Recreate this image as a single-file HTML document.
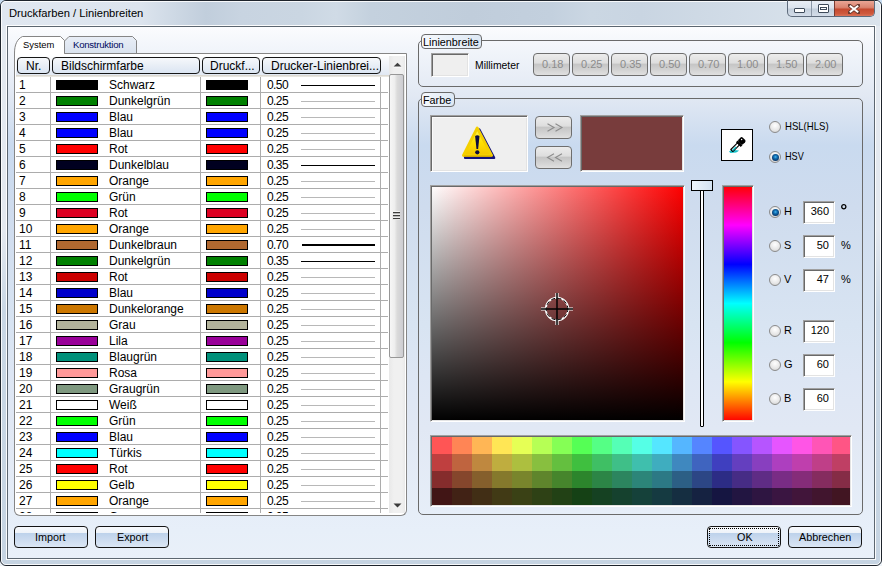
<!DOCTYPE html><html><head><meta charset="utf-8"><style>
*{margin:0;padding:0;box-sizing:border-box}
html,body{width:882px;height:566px;overflow:hidden;background:linear-gradient(#c8dcf0,#eef3f8)}
body{position:relative;font-family:"Liberation Sans", sans-serif;font-size:12px;color:#000}
.a{position:absolute}
.t{position:absolute;white-space:nowrap;line-height:1}
.gb{position:absolute;border:1px solid #6e6e6e;border-radius:4px;background:linear-gradient(#ececec,#dedede 42%,#c6c6c6 50%,#d2d2d2 75%,#e0e0e0)}
.gt{position:absolute;white-space:nowrap;line-height:1;font-size:11px;color:#8c8c8c}
.bb{position:absolute;border:1px solid #141414;border-radius:4px;background:linear-gradient(#f8fafd 0,#eef3f9 28%,#bdd2eb 31%,#c8d9ee 55%,#dbe6f4 100%)}
.bt{position:absolute;white-space:nowrap;line-height:1;font-size:10.8px;color:#000}
.sk{position:absolute;border:1px solid;border-color:#a0a0a0 #fff #fff #a0a0a0;box-shadow:inset 1px 1px 0 #696969,inset -1px -1px 0 #e3e3e3}
.ed{position:absolute;border:1px solid;border-color:#a0a0a0 #fff #fff #a0a0a0;box-shadow:inset 1px 1px 0 #696969,inset -1px -1px 0 #e3e3e3;background:#fff}
.lt{position:absolute;white-space:nowrap;line-height:1;font-size:11px;color:#000}
</style></head><body>

<div class="a" style="left:0;top:0;width:882px;height:566px;border:1px solid #1e242c;border-radius:6px 6px 6px 6px;background:linear-gradient(#e3e9f0 0,#e4e9f0 230px,#c9d7e5 310px,#c6d4e2 566px)"></div>
<div class="a" style="left:1px;top:1px;width:880px;height:25px;border-radius:5px 5px 0 0;background:linear-gradient(90deg,#e0e7f0 0,#dce4ee 140px,#cdd8e4 175px,#c1cedc 205px,#c8d4e1 240px,#cad6e2 300px,#d0dbe6 335px,#c4d1de 370px,#c0cddb 470px,#c3d0de 550px,#cbd7e3 590px,#c9d5e2 640px,#d6e0ea 790px,#dae3ec 880px)"></div>
<div class="a" style="left:1px;top:1px;width:880px;height:564px;border:1px solid rgba(255,255,255,.85);border-radius:5px;"></div>
<div class="a" style="left:6px;top:25px;width:870px;height:535px;border:1px solid rgba(255,255,255,.9)"></div>
<div class="t" style="left:9px;top:8px;font-size:11.2px;color:#000">Druckfarben / Linienbreiten</div>
<div class="a" style="left:787px;top:0;width:88px;height:17px;border:1px solid #5e6b7c;border-top:1px solid #2e2e2e;border-radius:0 0 5px 5px;overflow:hidden;background:linear-gradient(#e9eef5,#dbe3ed 45%,#c3cfdc 55%,#d4dde9)"><div class="a" style="left:23px;top:0;width:1px;height:17px;background:#8b97a6"></div><div class="a" style="left:46px;top:0;width:1px;height:17px;background:#7a3a30"></div><div class="a" style="left:47px;top:0;width:40px;height:16px;background:linear-gradient(#e9a595,#d98470 40%,#c54a30 52%,#cf5a3e 80%,#e08068)"></div><div class="a" style="left:6px;top:7px;width:11px;height:5px;border:1px solid #3e4a5a;background:#fff;border-radius:1px"></div><div class="a" style="left:30px;top:3px;width:11px;height:9px;border:1px solid #3e4a5a;background:#fff;border-radius:1px"></div><div class="a" style="left:32px;top:6px;width:7px;height:3px;border:1px solid #3e4a5a"></div><svg class="a" style="left:60px;top:3px" width="12" height="10" viewBox="0 0 12 10"><path d="M1.5 1.5 L10.5 8.5 M10.5 1.5 L1.5 8.5" stroke="#6a3a30" stroke-width="3.6" stroke-linecap="round"/><path d="M1.8 1.7 L10.2 8.3 M10.2 1.7 L1.8 8.3" stroke="#fff" stroke-width="2"/></svg></div>
<div class="a" style="left:7px;top:26px;width:868px;height:533px;border:1px solid #5c6670;background:linear-gradient(#fbfcfe 0px,#f3f6fb 18px,#e1e8f3 71px,#c9daef 118px,#cfdcee 181px,#d8e4f2 298px,#dde6f4 348px,#e1e8f4 401px,#e7eff9 503px,#e9f0f9 532px)"></div>
<svg class="a" style="left:0;top:0" width="410" height="60" viewBox="0 0 410 60"><defs><linearGradient id="kt" x1="0" y1="0" x2="0" y2="1"><stop offset="0" stop-color="#e9eef6"/><stop offset="1" stop-color="#d9e2ee"/></linearGradient></defs><path d="M64.5 54 L64.5 41 L69 36.5 L132.5 36.5 L136.5 40.5 L136.5 54 Z" fill="url(#kt)" stroke="#858585" stroke-width="1"/><path d="M14.5 60 L14.5 53 C14.5 45 17 39 22.5 36.5 L60.5 36.5 L64.5 40.5 L64.5 54 L406.5 54 L406.5 60" fill="#fff" stroke="none"/><path d="M14.5 60 L14.5 53 C14.5 45 17 39 22.5 36.5 L60.5 36.5 L64.5 40.5 L64.5 53.5 L406.5 53.5 L406.5 60" fill="none" stroke="#858585" stroke-width="1"/></svg>
<div class="t" style="left:23px;top:40px;font-size:9.4px;color:#000">System</div>
<div class="t" style="left:73px;top:40px;font-size:9.6px;letter-spacing:-0.25px;color:#000a60">Konstruktion</div>
<div class="a" style="left:14px;top:54px;width:393px;height:462px;border:1px solid #858585;border-top:none;border-radius:0 0 6px 6px;background:#fff"></div>
<div class="a" style="left:16px;top:55px;width:373px;height:21px;background:linear-gradient(#ffffff,#f2f5fa 40%,#dfe7f2)"></div>
<div class="a" style="left:16px;top:75px;width:373px;height:2px;background:linear-gradient(#d6d2ca,#efede8)"></div>
<div class="a" style="left:17px;top:57px;width:33px;height:17px;border:1px solid #161616;border-radius:4px;background:linear-gradient(#f6f8fb,#e8eef6 50%,#dbe5f2)"></div>
<div class="t" style="left:26px;top:60px;font-size:12px">Nr.</div>
<div class="a" style="left:52px;top:57px;width:148px;height:17px;border:1px solid #161616;border-radius:4px;background:linear-gradient(#f6f8fb,#e8eef6 50%,#dbe5f2)"></div>
<div class="t" style="left:61px;top:60px;font-size:12px">Bildschirmfarbe</div>
<div class="a" style="left:202px;top:57px;width:58px;height:17px;border:1px solid #161616;border-radius:4px;background:linear-gradient(#f6f8fb,#e8eef6 50%,#dbe5f2)"></div>
<div class="t" style="left:210px;top:60px;font-size:12px">Druckf...</div>
<div class="a" style="left:262px;top:57px;width:119px;height:17px;border:1px solid #161616;border-radius:4px;background:linear-gradient(#f6f8fb,#e8eef6 50%,#dbe5f2)"></div>
<div class="t" style="left:271px;top:60px;font-size:12px">Drucker-Linienbrei...</div>
<div class="a" style="left:16px;top:77px;width:372px;height:436px;overflow:hidden">
<div class="a" style="left:34px;top:0;width:1px;height:440px;background:#acacac"></div>
<div class="a" style="left:184px;top:0;width:1px;height:440px;background:#acacac"></div>
<div class="a" style="left:244px;top:0;width:1px;height:440px;background:#acacac"></div>
<div class="a" style="left:364px;top:0;width:1px;height:440px;background:#acacac"></div>
<div class="a" style="left:0;top:15px;width:372px;height:1px;background:#acacac"></div>
<div class="t" style="left:3px;top:2px">1</div>
<div class="a" style="left:40px;top:3px;width:42px;height:10px;border:1px solid #000;background:#000000"></div>
<div class="t" style="left:93px;top:2px">Schwarz</div>
<div class="a" style="left:190px;top:3px;width:42px;height:10px;border:1px solid #000;background:#000000"></div>
<div class="t" style="left:251px;top:2px;letter-spacing:-0.6px">0.50</div>
<div class="a" style="left:285px;top:8px;width:74px;height:1px;background:#000"></div>
<div class="a" style="left:0;top:31px;width:372px;height:1px;background:#acacac"></div>
<div class="t" style="left:3px;top:18px">2</div>
<div class="a" style="left:40px;top:19px;width:42px;height:10px;border:1px solid #000;background:#008000"></div>
<div class="t" style="left:93px;top:18px">Dunkelgrün</div>
<div class="a" style="left:190px;top:19px;width:42px;height:10px;border:1px solid #000;background:#008000"></div>
<div class="t" style="left:251px;top:18px;letter-spacing:-0.6px">0.25</div>
<div class="a" style="left:285px;top:24px;width:74px;height:1px;background:#b8b8b8"></div>
<div class="a" style="left:0;top:47px;width:372px;height:1px;background:#acacac"></div>
<div class="t" style="left:3px;top:34px">3</div>
<div class="a" style="left:40px;top:35px;width:42px;height:10px;border:1px solid #000;background:#0000ff"></div>
<div class="t" style="left:93px;top:34px">Blau</div>
<div class="a" style="left:190px;top:35px;width:42px;height:10px;border:1px solid #000;background:#0000ff"></div>
<div class="t" style="left:251px;top:34px;letter-spacing:-0.6px">0.25</div>
<div class="a" style="left:285px;top:40px;width:74px;height:1px;background:#b8b8b8"></div>
<div class="a" style="left:0;top:63px;width:372px;height:1px;background:#acacac"></div>
<div class="t" style="left:3px;top:50px">4</div>
<div class="a" style="left:40px;top:51px;width:42px;height:10px;border:1px solid #000;background:#0000ff"></div>
<div class="t" style="left:93px;top:50px">Blau</div>
<div class="a" style="left:190px;top:51px;width:42px;height:10px;border:1px solid #000;background:#0000ff"></div>
<div class="t" style="left:251px;top:50px;letter-spacing:-0.6px">0.25</div>
<div class="a" style="left:285px;top:56px;width:74px;height:1px;background:#b8b8b8"></div>
<div class="a" style="left:0;top:79px;width:372px;height:1px;background:#acacac"></div>
<div class="t" style="left:3px;top:66px">5</div>
<div class="a" style="left:40px;top:67px;width:42px;height:10px;border:1px solid #000;background:#ff0000"></div>
<div class="t" style="left:93px;top:66px">Rot</div>
<div class="a" style="left:190px;top:67px;width:42px;height:10px;border:1px solid #000;background:#ff0000"></div>
<div class="t" style="left:251px;top:66px;letter-spacing:-0.6px">0.25</div>
<div class="a" style="left:285px;top:72px;width:74px;height:1px;background:#b8b8b8"></div>
<div class="a" style="left:0;top:95px;width:372px;height:1px;background:#acacac"></div>
<div class="t" style="left:3px;top:82px">6</div>
<div class="a" style="left:40px;top:83px;width:42px;height:10px;border:1px solid #000;background:#000020"></div>
<div class="t" style="left:93px;top:82px">Dunkelblau</div>
<div class="a" style="left:190px;top:83px;width:42px;height:10px;border:1px solid #000;background:#000020"></div>
<div class="t" style="left:251px;top:82px;letter-spacing:-0.6px">0.35</div>
<div class="a" style="left:285px;top:88px;width:74px;height:1px;background:#000"></div>
<div class="a" style="left:0;top:111px;width:372px;height:1px;background:#acacac"></div>
<div class="t" style="left:3px;top:98px">7</div>
<div class="a" style="left:40px;top:99px;width:42px;height:10px;border:1px solid #000;background:#ffa500"></div>
<div class="t" style="left:93px;top:98px">Orange</div>
<div class="a" style="left:190px;top:99px;width:42px;height:10px;border:1px solid #000;background:#ffa500"></div>
<div class="t" style="left:251px;top:98px;letter-spacing:-0.6px">0.25</div>
<div class="a" style="left:285px;top:104px;width:74px;height:1px;background:#b8b8b8"></div>
<div class="a" style="left:0;top:127px;width:372px;height:1px;background:#acacac"></div>
<div class="t" style="left:3px;top:114px">8</div>
<div class="a" style="left:40px;top:115px;width:42px;height:10px;border:1px solid #000;background:#00ff00"></div>
<div class="t" style="left:93px;top:114px">Grün</div>
<div class="a" style="left:190px;top:115px;width:42px;height:10px;border:1px solid #000;background:#00ff00"></div>
<div class="t" style="left:251px;top:114px;letter-spacing:-0.6px">0.25</div>
<div class="a" style="left:285px;top:120px;width:74px;height:1px;background:#b8b8b8"></div>
<div class="a" style="left:0;top:143px;width:372px;height:1px;background:#acacac"></div>
<div class="t" style="left:3px;top:130px">9</div>
<div class="a" style="left:40px;top:131px;width:42px;height:10px;border:1px solid #000;background:#dd0022"></div>
<div class="t" style="left:93px;top:130px">Rot</div>
<div class="a" style="left:190px;top:131px;width:42px;height:10px;border:1px solid #000;background:#dd0022"></div>
<div class="t" style="left:251px;top:130px;letter-spacing:-0.6px">0.25</div>
<div class="a" style="left:285px;top:136px;width:74px;height:1px;background:#b8b8b8"></div>
<div class="a" style="left:0;top:159px;width:372px;height:1px;background:#acacac"></div>
<div class="t" style="left:3px;top:146px">10</div>
<div class="a" style="left:40px;top:147px;width:42px;height:10px;border:1px solid #000;background:#ffa500"></div>
<div class="t" style="left:93px;top:146px">Orange</div>
<div class="a" style="left:190px;top:147px;width:42px;height:10px;border:1px solid #000;background:#ffa500"></div>
<div class="t" style="left:251px;top:146px;letter-spacing:-0.6px">0.25</div>
<div class="a" style="left:285px;top:152px;width:74px;height:1px;background:#b8b8b8"></div>
<div class="a" style="left:0;top:175px;width:372px;height:1px;background:#acacac"></div>
<div class="t" style="left:3px;top:162px">11</div>
<div class="a" style="left:40px;top:163px;width:42px;height:10px;border:1px solid #000;background:#b06830"></div>
<div class="t" style="left:93px;top:162px">Dunkelbraun</div>
<div class="a" style="left:190px;top:163px;width:42px;height:10px;border:1px solid #000;background:#b06830"></div>
<div class="t" style="left:251px;top:162px;letter-spacing:-0.6px">0.70</div>
<div class="a" style="left:286px;top:167px;width:73px;height:2px;background:#000"></div>
<div class="a" style="left:0;top:191px;width:372px;height:1px;background:#acacac"></div>
<div class="t" style="left:3px;top:178px">12</div>
<div class="a" style="left:40px;top:179px;width:42px;height:10px;border:1px solid #000;background:#008000"></div>
<div class="t" style="left:93px;top:178px">Dunkelgrün</div>
<div class="a" style="left:190px;top:179px;width:42px;height:10px;border:1px solid #000;background:#008000"></div>
<div class="t" style="left:251px;top:178px;letter-spacing:-0.6px">0.35</div>
<div class="a" style="left:285px;top:184px;width:74px;height:1px;background:#000"></div>
<div class="a" style="left:0;top:207px;width:372px;height:1px;background:#acacac"></div>
<div class="t" style="left:3px;top:194px">13</div>
<div class="a" style="left:40px;top:195px;width:42px;height:10px;border:1px solid #000;background:#cc0000"></div>
<div class="t" style="left:93px;top:194px">Rot</div>
<div class="a" style="left:190px;top:195px;width:42px;height:10px;border:1px solid #000;background:#cc0000"></div>
<div class="t" style="left:251px;top:194px;letter-spacing:-0.6px">0.25</div>
<div class="a" style="left:285px;top:200px;width:74px;height:1px;background:#b8b8b8"></div>
<div class="a" style="left:0;top:223px;width:372px;height:1px;background:#acacac"></div>
<div class="t" style="left:3px;top:210px">14</div>
<div class="a" style="left:40px;top:211px;width:42px;height:10px;border:1px solid #000;background:#0000cc"></div>
<div class="t" style="left:93px;top:210px">Blau</div>
<div class="a" style="left:190px;top:211px;width:42px;height:10px;border:1px solid #000;background:#0000cc"></div>
<div class="t" style="left:251px;top:210px;letter-spacing:-0.6px">0.25</div>
<div class="a" style="left:285px;top:216px;width:74px;height:1px;background:#b8b8b8"></div>
<div class="a" style="left:0;top:239px;width:372px;height:1px;background:#acacac"></div>
<div class="t" style="left:3px;top:226px">15</div>
<div class="a" style="left:40px;top:227px;width:42px;height:10px;border:1px solid #000;background:#cc7700"></div>
<div class="t" style="left:93px;top:226px">Dunkelorange</div>
<div class="a" style="left:190px;top:227px;width:42px;height:10px;border:1px solid #000;background:#cc7700"></div>
<div class="t" style="left:251px;top:226px;letter-spacing:-0.6px">0.25</div>
<div class="a" style="left:285px;top:232px;width:74px;height:1px;background:#b8b8b8"></div>
<div class="a" style="left:0;top:255px;width:372px;height:1px;background:#acacac"></div>
<div class="t" style="left:3px;top:242px">16</div>
<div class="a" style="left:40px;top:243px;width:42px;height:10px;border:1px solid #000;background:#b3b39b"></div>
<div class="t" style="left:93px;top:242px">Grau</div>
<div class="a" style="left:190px;top:243px;width:42px;height:10px;border:1px solid #000;background:#b3b39b"></div>
<div class="t" style="left:251px;top:242px;letter-spacing:-0.6px">0.25</div>
<div class="a" style="left:285px;top:248px;width:74px;height:1px;background:#b8b8b8"></div>
<div class="a" style="left:0;top:271px;width:372px;height:1px;background:#acacac"></div>
<div class="t" style="left:3px;top:258px">17</div>
<div class="a" style="left:40px;top:259px;width:42px;height:10px;border:1px solid #000;background:#990099"></div>
<div class="t" style="left:93px;top:258px">Lila</div>
<div class="a" style="left:190px;top:259px;width:42px;height:10px;border:1px solid #000;background:#990099"></div>
<div class="t" style="left:251px;top:258px;letter-spacing:-0.6px">0.25</div>
<div class="a" style="left:285px;top:264px;width:74px;height:1px;background:#b8b8b8"></div>
<div class="a" style="left:0;top:287px;width:372px;height:1px;background:#acacac"></div>
<div class="t" style="left:3px;top:274px">18</div>
<div class="a" style="left:40px;top:275px;width:42px;height:10px;border:1px solid #000;background:#00907a"></div>
<div class="t" style="left:93px;top:274px">Blaugrün</div>
<div class="a" style="left:190px;top:275px;width:42px;height:10px;border:1px solid #000;background:#00907a"></div>
<div class="t" style="left:251px;top:274px;letter-spacing:-0.6px">0.25</div>
<div class="a" style="left:285px;top:280px;width:74px;height:1px;background:#b8b8b8"></div>
<div class="a" style="left:0;top:303px;width:372px;height:1px;background:#acacac"></div>
<div class="t" style="left:3px;top:290px">19</div>
<div class="a" style="left:40px;top:291px;width:42px;height:10px;border:1px solid #000;background:#ff9999"></div>
<div class="t" style="left:93px;top:290px">Rosa</div>
<div class="a" style="left:190px;top:291px;width:42px;height:10px;border:1px solid #000;background:#ff9999"></div>
<div class="t" style="left:251px;top:290px;letter-spacing:-0.6px">0.25</div>
<div class="a" style="left:285px;top:296px;width:74px;height:1px;background:#b8b8b8"></div>
<div class="a" style="left:0;top:319px;width:372px;height:1px;background:#acacac"></div>
<div class="t" style="left:3px;top:306px">20</div>
<div class="a" style="left:40px;top:307px;width:42px;height:10px;border:1px solid #000;background:#7f9980"></div>
<div class="t" style="left:93px;top:306px">Graugrün</div>
<div class="a" style="left:190px;top:307px;width:42px;height:10px;border:1px solid #000;background:#7f9980"></div>
<div class="t" style="left:251px;top:306px;letter-spacing:-0.6px">0.25</div>
<div class="a" style="left:285px;top:312px;width:74px;height:1px;background:#b8b8b8"></div>
<div class="a" style="left:0;top:335px;width:372px;height:1px;background:#acacac"></div>
<div class="t" style="left:3px;top:322px">21</div>
<div class="a" style="left:40px;top:323px;width:42px;height:10px;border:1px solid #000;background:#ffffff"></div>
<div class="t" style="left:93px;top:322px">Weiß</div>
<div class="a" style="left:190px;top:323px;width:42px;height:10px;border:1px solid #000;background:#ffffff"></div>
<div class="t" style="left:251px;top:322px;letter-spacing:-0.6px">0.25</div>
<div class="a" style="left:285px;top:328px;width:74px;height:1px;background:#b8b8b8"></div>
<div class="a" style="left:0;top:351px;width:372px;height:1px;background:#acacac"></div>
<div class="t" style="left:3px;top:338px">22</div>
<div class="a" style="left:40px;top:339px;width:42px;height:10px;border:1px solid #000;background:#00ff00"></div>
<div class="t" style="left:93px;top:338px">Grün</div>
<div class="a" style="left:190px;top:339px;width:42px;height:10px;border:1px solid #000;background:#00ff00"></div>
<div class="t" style="left:251px;top:338px;letter-spacing:-0.6px">0.25</div>
<div class="a" style="left:285px;top:344px;width:74px;height:1px;background:#b8b8b8"></div>
<div class="a" style="left:0;top:367px;width:372px;height:1px;background:#acacac"></div>
<div class="t" style="left:3px;top:354px">23</div>
<div class="a" style="left:40px;top:355px;width:42px;height:10px;border:1px solid #000;background:#0000ff"></div>
<div class="t" style="left:93px;top:354px">Blau</div>
<div class="a" style="left:190px;top:355px;width:42px;height:10px;border:1px solid #000;background:#0000ff"></div>
<div class="t" style="left:251px;top:354px;letter-spacing:-0.6px">0.25</div>
<div class="a" style="left:285px;top:360px;width:74px;height:1px;background:#b8b8b8"></div>
<div class="a" style="left:0;top:383px;width:372px;height:1px;background:#acacac"></div>
<div class="t" style="left:3px;top:370px">24</div>
<div class="a" style="left:40px;top:371px;width:42px;height:10px;border:1px solid #000;background:#00ffff"></div>
<div class="t" style="left:93px;top:370px">Türkis</div>
<div class="a" style="left:190px;top:371px;width:42px;height:10px;border:1px solid #000;background:#00ffff"></div>
<div class="t" style="left:251px;top:370px;letter-spacing:-0.6px">0.25</div>
<div class="a" style="left:285px;top:376px;width:74px;height:1px;background:#b8b8b8"></div>
<div class="a" style="left:0;top:399px;width:372px;height:1px;background:#acacac"></div>
<div class="t" style="left:3px;top:386px">25</div>
<div class="a" style="left:40px;top:387px;width:42px;height:10px;border:1px solid #000;background:#ff0000"></div>
<div class="t" style="left:93px;top:386px">Rot</div>
<div class="a" style="left:190px;top:387px;width:42px;height:10px;border:1px solid #000;background:#ff0000"></div>
<div class="t" style="left:251px;top:386px;letter-spacing:-0.6px">0.25</div>
<div class="a" style="left:285px;top:392px;width:74px;height:1px;background:#b8b8b8"></div>
<div class="a" style="left:0;top:415px;width:372px;height:1px;background:#acacac"></div>
<div class="t" style="left:3px;top:402px">26</div>
<div class="a" style="left:40px;top:403px;width:42px;height:10px;border:1px solid #000;background:#ffff00"></div>
<div class="t" style="left:93px;top:402px">Gelb</div>
<div class="a" style="left:190px;top:403px;width:42px;height:10px;border:1px solid #000;background:#ffff00"></div>
<div class="t" style="left:251px;top:402px;letter-spacing:-0.6px">0.25</div>
<div class="a" style="left:285px;top:408px;width:74px;height:1px;background:#b8b8b8"></div>
<div class="a" style="left:0;top:431px;width:372px;height:1px;background:#acacac"></div>
<div class="t" style="left:3px;top:418px">27</div>
<div class="a" style="left:40px;top:419px;width:42px;height:10px;border:1px solid #000;background:#ffa500"></div>
<div class="t" style="left:93px;top:418px">Orange</div>
<div class="a" style="left:190px;top:419px;width:42px;height:10px;border:1px solid #000;background:#ffa500"></div>
<div class="t" style="left:251px;top:418px;letter-spacing:-0.6px">0.25</div>
<div class="a" style="left:285px;top:424px;width:74px;height:1px;background:#b8b8b8"></div>
<div class="a" style="left:0;top:447px;width:372px;height:1px;background:#acacac"></div>
<div class="t" style="left:3px;top:434px">28</div>
<div class="a" style="left:40px;top:435px;width:42px;height:10px;border:1px solid #000;background:#000000"></div>
<div class="t" style="left:93px;top:434px">Grau</div>
<div class="a" style="left:190px;top:435px;width:42px;height:10px;border:1px solid #000;background:#000000"></div>
<div class="t" style="left:251px;top:434px;letter-spacing:-0.6px">0.25</div>
<div class="a" style="left:285px;top:440px;width:74px;height:1px;background:#b8b8b8"></div>
</div>
<div class="a" style="left:389px;top:56px;width:16px;height:457px;background:linear-gradient(90deg,#e8e8e8,#f0f0f0 30%,#f0f0f0 80%,#e9e9e9)"></div>
<svg class="a" style="left:393px;top:62px" width="9" height="6" viewBox="0 0 9 6"><path d="M0.5 5.5 L4.5 1.5 L8.5 5.5 Z" fill="#fff"/><path d="M0.6 4.6 L4.5 0.7 L8.4 4.6 Z" fill="#404040"/></svg>
<svg class="a" style="left:393px;top:503px" width="9" height="5" viewBox="0 0 9 5"><path d="M0.5 0.5 L4.5 4.5 L8.5 0.5 Z" fill="#3a3a3a"/></svg>
<div class="a" style="left:389px;top:74px;width:15px;height:284px;border:1px solid #979797;border-radius:2px;background:linear-gradient(90deg,#f6f6f6,#eeeeee 35%,#dadada 55%,#cdcdd2)"></div>
<div class="a" style="left:392px;top:211px;width:8px;height:9px;background:linear-gradient(#f4f4f4,#e4e4e4);border-radius:1px"></div>
<div class="a" style="left:393px;top:212px;width:7px;height:7px;background:repeating-linear-gradient(#3c3c3c 0 1px,#b8b8b8 1px 2px,#ececec 2px 3px)"></div>
<div class="bb" style="left:14px;top:526px;width:74px;height:22px"></div>
<div class="bt" style="left:35px;top:532px">Import</div>
<div class="bb" style="left:95px;top:526px;width:74px;height:22px"></div>
<div class="bt" style="left:117px;top:532px">Export</div>
<div class="bb" style="left:707px;top:526px;width:74px;height:22px"></div>
<div class="a" style="left:709px;top:528px;width:70px;height:18px;border:1px dotted #000"></div>
<div class="bt" style="left:737px;top:532px">OK</div>
<div class="bb" style="left:788px;top:526px;width:74px;height:22px"></div>
<div class="bt" style="left:799px;top:532px">Abbrechen</div>
<div class="a" style="left:418px;top:40px;width:445px;height:47px;border:1px solid #6a6a6a;border-radius:5px;"></div>
<div class="a" style="left:421px;top:34px;width:61px;height:15px;border:1px solid #6a6a6a;border-radius:4px;background:linear-gradient(90deg,#f6f9fd,#dde8f4)"></div>
<div class="t" style="left:423px;top:37px;font-size:10.8px">Linienbreite</div>
<div class="sk" style="left:431px;top:53px;width:38px;height:24px;background:#efefef"></div>
<div class="lt" style="left:475px;top:61px;font-size:10.4px">Millimeter</div>
<div class="gb" style="left:533px;top:53px;width:37px;height:23px"></div>
<div class="gt" style="left:542px;top:59px">0.18</div>
<div class="gb" style="left:572px;top:53px;width:37px;height:23px"></div>
<div class="gt" style="left:581px;top:59px">0.25</div>
<div class="gb" style="left:611px;top:53px;width:37px;height:23px"></div>
<div class="gt" style="left:620px;top:59px">0.35</div>
<div class="gb" style="left:650px;top:53px;width:37px;height:23px"></div>
<div class="gt" style="left:659px;top:59px">0.50</div>
<div class="gb" style="left:689px;top:53px;width:37px;height:23px"></div>
<div class="gt" style="left:698px;top:59px">0.70</div>
<div class="gb" style="left:728px;top:53px;width:37px;height:23px"></div>
<div class="gt" style="left:737px;top:59px">1.00</div>
<div class="gb" style="left:767px;top:53px;width:37px;height:23px"></div>
<div class="gt" style="left:776px;top:59px">1.50</div>
<div class="gb" style="left:806px;top:53px;width:37px;height:23px"></div>
<div class="gt" style="left:815px;top:59px">2.00</div>
<div class="a" style="left:418px;top:98px;width:445px;height:417px;border:1px solid #6a6a6a;border-radius:5px;"></div>
<div class="a" style="left:421px;top:92px;width:34px;height:15px;border:1px solid #6a6a6a;border-radius:4px;background:linear-gradient(90deg,#f6f9fd,#dde8f4)"></div>
<div class="t" style="left:423px;top:95px;font-size:10.8px">Farbe</div>
<div class="sk" style="left:430px;top:115px;width:98px;height:57px;background:#efefef;box-shadow:inset 1px 1px 0 #696969,inset 2px 2px 0 #fafafa,inset -1px -1px 0 #e3e3e3"></div>
<svg class="a" style="left:460px;top:125px" width="38" height="38" viewBox="0 0 38 38"><defs><linearGradient id="wg" x1="0" y1="0" x2="0" y2="1"><stop offset="0" stop-color="#fff45a"/><stop offset=".55" stop-color="#ffdf00"/><stop offset="1" stop-color="#f2c400"/></linearGradient></defs><path d="M19.2 4.6 L34 32.8 L5.2 32.8 Z" fill="#12127a" stroke="#12127a" stroke-width="2.6" stroke-linejoin="round"/><path d="M17.2 3 L31.6 30.4 L3.4 30.4 Z" fill="url(#wg)" stroke="#f4d000" stroke-width="2.8" stroke-linejoin="round"/><path d="M4.2 31.2 L31 31.2" stroke="#d8a800" stroke-width="1.2" stroke-linecap="round"/><path d="M15.1 11 Q17.3 9.6 19.5 11 L18.1 24 L16.5 24 Z" fill="#0c0c40"/><circle cx="17.3" cy="27.3" r="2.1" fill="#0c0c40"/></svg>
<div class="gb" style="left:535px;top:116px;width:37px;height:23px"></div>
<div class="gb" style="left:535px;top:146px;width:37px;height:23px"></div>
<svg class="a" style="left:546px;top:123px" width="18" height="9" viewBox="0 0 18 9"><path d="M1.5 0.8 L8 4.5 L1.5 8.2 M9.5 0.8 L16 4.5 L9.5 8.2" fill="none" stroke="#8c8c8c" stroke-width="1.1"/></svg>
<svg class="a" style="left:546px;top:153px" width="18" height="9" viewBox="0 0 18 9"><path d="M8 0.8 L1.5 4.5 L8 8.2 M16 0.8 L9.5 4.5 L16 8.2" fill="none" stroke="#8c8c8c" stroke-width="1.1"/></svg>
<div class="sk" style="left:580px;top:115px;width:104px;height:57px;background:#783c3c;"></div>
<div class="sk" style="left:430px;top:185px;width:255px;height:237px;background:linear-gradient(transparent,#000),linear-gradient(90deg,#fff,#f00);"></div>
<svg class="a" style="left:541px;top:293px" width="32" height="32" viewBox="0 0 32 32"><path d="M16 0 V5 M16 27 V32 M0 16 H5 M27 16 H32" stroke="#fff" stroke-width="3.2"/><circle cx="16" cy="16" r="11.3" fill="none" stroke="#fff" stroke-width="1.8"/><circle cx="16" cy="16" r="10.8" fill="none" stroke="#000" stroke-width="1" stroke-dasharray="4 2.5" stroke-dashoffset="1"/><path d="M16 0 V32 M0 16 H32" stroke="#000" stroke-width="1.5"/></svg>
<div class="a" style="left:700px;top:186px;width:4px;height:241px;border:1px solid #000;border-radius:0 0 1px 1px;background:#fff"></div>
<div class="a" style="left:691px;top:180px;width:22px;height:11px;border:1px solid #000;background:linear-gradient(90deg,#eef6fd,#d3e2f1)"></div>
<div class="sk" style="left:722px;top:185px;width:32px;height:237px;background:linear-gradient(#f00,#f0f 16.67%,#00f 33.33%,#0ff 50%,#0f0 66.67%,#ff0 83.33%,#f00);"></div>
<div class="a" style="left:721px;top:129px;width:32px;height:32px;border:1px solid #000;background:#fff"></div>
<svg class="a" style="left:724px;top:132px" width="26" height="26" viewBox="0 0 26 26"><path d="M5 19.6 Q7 17.6 10 17.9 L15 18.4 Q13.5 20.9 6.5 20.9 Z" fill="#16c0c8"/><path d="M6.8 17.5 L13.5 10.8 L15.5 12.8 L8.8 19.5 Z" fill="#fff" stroke="#000" stroke-width="1.1" stroke-linejoin="round"/><path d="M8 18 L11.6 14.4 L12.6 15.4 L9 19 Z" fill="#16c0c8"/><path d="M12.8 9.4 L17.6 14.2" stroke="#000" stroke-width="2.4"/><rect x="14.5" y="5.9" width="6.6" height="6" rx="1.8" transform="rotate(45 17.8 8.9)" fill="#000"/><circle cx="17.6" cy="7.6" r="0.75" fill="#fff"/></svg>
<div class="a" style="left:769px;top:121px;width:12px;height:12px;border-radius:50%;border:1px solid #8b8b8b;background:radial-gradient(circle at 50% 35%,#ffffff,#e6e6e6 60%,#cacaca)"></div>
<div class="lt" style="left:785px;top:121px;transform:scaleX(.87);transform-origin:0 0">HSL(HLS)</div>
<div class="a" style="left:769px;top:151px;width:12px;height:12px;border-radius:50%;border:1px solid #8b8b8b;background:radial-gradient(circle at 50% 35%,#ffffff,#e6e6e6 60%,#cacaca)"></div>
<div class="a" style="left:772px;top:154px;width:7px;height:7px;border-radius:50%;background:radial-gradient(circle at 50% 42%,#48b8f0 0,#1170b4 30%,#08386c 70%,#062650 100%)"></div>
<div class="lt" style="left:785px;top:151px;transform:scaleX(.83);transform-origin:0 0">HSV</div>
<div class="a" style="left:769px;top:206px;width:12px;height:12px;border-radius:50%;border:1px solid #8b8b8b;background:radial-gradient(circle at 50% 35%,#ffffff,#e6e6e6 60%,#cacaca)"></div>
<div class="a" style="left:772px;top:209px;width:7px;height:7px;border-radius:50%;background:radial-gradient(circle at 50% 42%,#48b8f0 0,#1170b4 30%,#08386c 70%,#062650 100%)"></div>
<div class="lt" style="left:784px;top:206px">H</div>
<div class="ed" style="left:803px;top:201px;width:32px;height:23px"></div>
<div class="lt" style="left:803px;top:206px;width:26px;text-align:right">360</div>
<svg class="a" style="left:840px;top:203px" width="8" height="8" viewBox="0 0 8 8"><circle cx="3.8" cy="3.8" r="2.1" fill="none" stroke="#000" stroke-width="1.3"/></svg>
<div class="a" style="left:769px;top:240px;width:12px;height:12px;border-radius:50%;border:1px solid #8b8b8b;background:radial-gradient(circle at 50% 35%,#ffffff,#e6e6e6 60%,#cacaca)"></div>
<div class="lt" style="left:784px;top:240px">S</div>
<div class="ed" style="left:803px;top:235px;width:32px;height:23px"></div>
<div class="lt" style="left:803px;top:240px;width:26px;text-align:right">50</div>
<div class="lt" style="left:841px;top:240px">%</div>
<div class="a" style="left:769px;top:274px;width:12px;height:12px;border-radius:50%;border:1px solid #8b8b8b;background:radial-gradient(circle at 50% 35%,#ffffff,#e6e6e6 60%,#cacaca)"></div>
<div class="lt" style="left:784px;top:274px">V</div>
<div class="ed" style="left:803px;top:269px;width:32px;height:23px"></div>
<div class="lt" style="left:803px;top:274px;width:26px;text-align:right">47</div>
<div class="lt" style="left:841px;top:274px">%</div>
<div class="a" style="left:769px;top:325px;width:12px;height:12px;border-radius:50%;border:1px solid #8b8b8b;background:radial-gradient(circle at 50% 35%,#ffffff,#e6e6e6 60%,#cacaca)"></div>
<div class="lt" style="left:784px;top:325px">R</div>
<div class="ed" style="left:803px;top:320px;width:32px;height:23px"></div>
<div class="lt" style="left:803px;top:325px;width:26px;text-align:right">120</div>
<div class="a" style="left:769px;top:359px;width:12px;height:12px;border-radius:50%;border:1px solid #8b8b8b;background:radial-gradient(circle at 50% 35%,#ffffff,#e6e6e6 60%,#cacaca)"></div>
<div class="lt" style="left:784px;top:359px">G</div>
<div class="ed" style="left:803px;top:354px;width:32px;height:23px"></div>
<div class="lt" style="left:803px;top:359px;width:26px;text-align:right">60</div>
<div class="a" style="left:769px;top:393px;width:12px;height:12px;border-radius:50%;border:1px solid #8b8b8b;background:radial-gradient(circle at 50% 35%,#ffffff,#e6e6e6 60%,#cacaca)"></div>
<div class="lt" style="left:784px;top:393px">B</div>
<div class="ed" style="left:803px;top:388px;width:32px;height:23px"></div>
<div class="lt" style="left:803px;top:393px;width:26px;text-align:right">60</div>
<div class="sk" style="left:430px;top:435px;width:422px;height:72px;background:#000"></div>
<div class="a" style="left:432px;top:437px;width:20px;height:17px;background:rgb(255,85,85)"></div>
<div class="a" style="left:452px;top:437px;width:20px;height:17px;background:rgb(255,133,85)"></div>
<div class="a" style="left:472px;top:437px;width:20px;height:17px;background:rgb(255,182,85)"></div>
<div class="a" style="left:492px;top:437px;width:20px;height:17px;background:rgb(255,230,85)"></div>
<div class="a" style="left:512px;top:437px;width:20px;height:17px;background:rgb(230,255,85)"></div>
<div class="a" style="left:532px;top:437px;width:20px;height:17px;background:rgb(182,255,85)"></div>
<div class="a" style="left:552px;top:437px;width:20px;height:17px;background:rgb(133,255,85)"></div>
<div class="a" style="left:572px;top:437px;width:20px;height:17px;background:rgb(85,255,85)"></div>
<div class="a" style="left:592px;top:437px;width:20px;height:17px;background:rgb(85,255,133)"></div>
<div class="a" style="left:612px;top:437px;width:20px;height:17px;background:rgb(85,255,182)"></div>
<div class="a" style="left:632px;top:437px;width:20px;height:17px;background:rgb(85,255,230)"></div>
<div class="a" style="left:652px;top:437px;width:20px;height:17px;background:rgb(85,230,255)"></div>
<div class="a" style="left:672px;top:437px;width:20px;height:17px;background:rgb(85,182,255)"></div>
<div class="a" style="left:692px;top:437px;width:20px;height:17px;background:rgb(85,133,255)"></div>
<div class="a" style="left:712px;top:437px;width:20px;height:17px;background:rgb(85,85,255)"></div>
<div class="a" style="left:732px;top:437px;width:20px;height:17px;background:rgb(133,85,255)"></div>
<div class="a" style="left:752px;top:437px;width:20px;height:17px;background:rgb(182,85,255)"></div>
<div class="a" style="left:772px;top:437px;width:20px;height:17px;background:rgb(230,85,255)"></div>
<div class="a" style="left:792px;top:437px;width:20px;height:17px;background:rgb(255,85,230)"></div>
<div class="a" style="left:812px;top:437px;width:20px;height:17px;background:rgb(255,85,182)"></div>
<div class="a" style="left:832px;top:437px;width:18px;height:17px;background:rgb(255,85,133)"></div>
<div class="a" style="left:432px;top:454px;width:20px;height:17px;background:rgb(191,63,63)"></div>
<div class="a" style="left:452px;top:454px;width:20px;height:17px;background:rgb(191,100,63)"></div>
<div class="a" style="left:472px;top:454px;width:20px;height:17px;background:rgb(191,136,63)"></div>
<div class="a" style="left:492px;top:454px;width:20px;height:17px;background:rgb(191,173,63)"></div>
<div class="a" style="left:512px;top:454px;width:20px;height:17px;background:rgb(173,191,63)"></div>
<div class="a" style="left:532px;top:454px;width:20px;height:17px;background:rgb(136,191,63)"></div>
<div class="a" style="left:552px;top:454px;width:20px;height:17px;background:rgb(100,191,63)"></div>
<div class="a" style="left:572px;top:454px;width:20px;height:17px;background:rgb(63,191,63)"></div>
<div class="a" style="left:592px;top:454px;width:20px;height:17px;background:rgb(63,191,100)"></div>
<div class="a" style="left:612px;top:454px;width:20px;height:17px;background:rgb(63,191,136)"></div>
<div class="a" style="left:632px;top:454px;width:20px;height:17px;background:rgb(63,191,173)"></div>
<div class="a" style="left:652px;top:454px;width:20px;height:17px;background:rgb(63,173,191)"></div>
<div class="a" style="left:672px;top:454px;width:20px;height:17px;background:rgb(63,136,191)"></div>
<div class="a" style="left:692px;top:454px;width:20px;height:17px;background:rgb(63,100,191)"></div>
<div class="a" style="left:712px;top:454px;width:20px;height:17px;background:rgb(63,63,191)"></div>
<div class="a" style="left:732px;top:454px;width:20px;height:17px;background:rgb(100,63,191)"></div>
<div class="a" style="left:752px;top:454px;width:20px;height:17px;background:rgb(136,63,191)"></div>
<div class="a" style="left:772px;top:454px;width:20px;height:17px;background:rgb(173,63,191)"></div>
<div class="a" style="left:792px;top:454px;width:20px;height:17px;background:rgb(191,63,173)"></div>
<div class="a" style="left:812px;top:454px;width:20px;height:17px;background:rgb(191,63,136)"></div>
<div class="a" style="left:832px;top:454px;width:18px;height:17px;background:rgb(191,63,100)"></div>
<div class="a" style="left:432px;top:471px;width:20px;height:17px;background:rgb(133,44,44)"></div>
<div class="a" style="left:452px;top:471px;width:20px;height:17px;background:rgb(133,70,44)"></div>
<div class="a" style="left:472px;top:471px;width:20px;height:17px;background:rgb(133,95,44)"></div>
<div class="a" style="left:492px;top:471px;width:20px;height:17px;background:rgb(133,121,44)"></div>
<div class="a" style="left:512px;top:471px;width:20px;height:17px;background:rgb(121,133,44)"></div>
<div class="a" style="left:532px;top:471px;width:20px;height:17px;background:rgb(95,133,44)"></div>
<div class="a" style="left:552px;top:471px;width:20px;height:17px;background:rgb(70,133,44)"></div>
<div class="a" style="left:572px;top:471px;width:20px;height:17px;background:rgb(44,133,44)"></div>
<div class="a" style="left:592px;top:471px;width:20px;height:17px;background:rgb(44,133,70)"></div>
<div class="a" style="left:612px;top:471px;width:20px;height:17px;background:rgb(44,133,95)"></div>
<div class="a" style="left:632px;top:471px;width:20px;height:17px;background:rgb(44,133,121)"></div>
<div class="a" style="left:652px;top:471px;width:20px;height:17px;background:rgb(44,121,133)"></div>
<div class="a" style="left:672px;top:471px;width:20px;height:17px;background:rgb(44,95,133)"></div>
<div class="a" style="left:692px;top:471px;width:20px;height:17px;background:rgb(44,70,133)"></div>
<div class="a" style="left:712px;top:471px;width:20px;height:17px;background:rgb(44,44,133)"></div>
<div class="a" style="left:732px;top:471px;width:20px;height:17px;background:rgb(70,44,133)"></div>
<div class="a" style="left:752px;top:471px;width:20px;height:17px;background:rgb(95,44,133)"></div>
<div class="a" style="left:772px;top:471px;width:20px;height:17px;background:rgb(121,44,133)"></div>
<div class="a" style="left:792px;top:471px;width:20px;height:17px;background:rgb(133,44,121)"></div>
<div class="a" style="left:812px;top:471px;width:20px;height:17px;background:rgb(133,44,95)"></div>
<div class="a" style="left:832px;top:471px;width:18px;height:17px;background:rgb(133,44,70)"></div>
<div class="a" style="left:432px;top:488px;width:20px;height:17px;background:rgb(65,21,21)"></div>
<div class="a" style="left:452px;top:488px;width:20px;height:17px;background:rgb(65,34,21)"></div>
<div class="a" style="left:472px;top:488px;width:20px;height:17px;background:rgb(65,46,21)"></div>
<div class="a" style="left:492px;top:488px;width:20px;height:17px;background:rgb(65,58,21)"></div>
<div class="a" style="left:512px;top:488px;width:20px;height:17px;background:rgb(58,65,21)"></div>
<div class="a" style="left:532px;top:488px;width:20px;height:17px;background:rgb(46,65,21)"></div>
<div class="a" style="left:552px;top:488px;width:20px;height:17px;background:rgb(34,65,21)"></div>
<div class="a" style="left:572px;top:488px;width:20px;height:17px;background:rgb(21,65,21)"></div>
<div class="a" style="left:592px;top:488px;width:20px;height:17px;background:rgb(21,65,34)"></div>
<div class="a" style="left:612px;top:488px;width:20px;height:17px;background:rgb(21,65,46)"></div>
<div class="a" style="left:632px;top:488px;width:20px;height:17px;background:rgb(21,65,58)"></div>
<div class="a" style="left:652px;top:488px;width:20px;height:17px;background:rgb(21,58,65)"></div>
<div class="a" style="left:672px;top:488px;width:20px;height:17px;background:rgb(21,46,65)"></div>
<div class="a" style="left:692px;top:488px;width:20px;height:17px;background:rgb(21,34,65)"></div>
<div class="a" style="left:712px;top:488px;width:20px;height:17px;background:rgb(21,21,65)"></div>
<div class="a" style="left:732px;top:488px;width:20px;height:17px;background:rgb(34,21,65)"></div>
<div class="a" style="left:752px;top:488px;width:20px;height:17px;background:rgb(46,21,65)"></div>
<div class="a" style="left:772px;top:488px;width:20px;height:17px;background:rgb(58,21,65)"></div>
<div class="a" style="left:792px;top:488px;width:20px;height:17px;background:rgb(65,21,58)"></div>
<div class="a" style="left:812px;top:488px;width:20px;height:17px;background:rgb(65,21,46)"></div>
<div class="a" style="left:832px;top:488px;width:18px;height:17px;background:rgb(65,21,34)"></div>
</body></html>
